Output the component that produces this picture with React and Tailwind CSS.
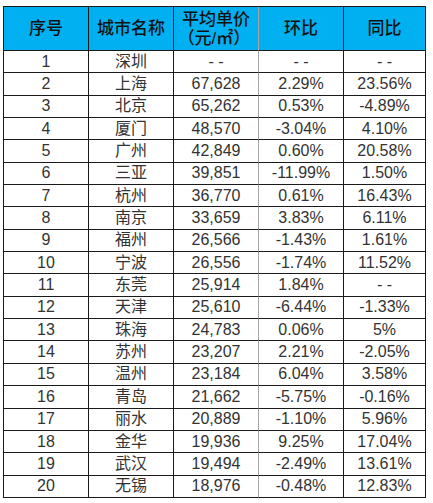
const rows = [
  ["1", "深圳", "- -", "- -", "- -"],
  ["2", "上海", "67,628", "2.29%", "23.56%"],
  ["3", "北京", "65,262", "0.53%", "-4.89%"],
  ["4", "厦门", "48,570", "-3.04%", "4.10%"],
  ["5", "广州", "42,849", "0.60%", "20.58%"],
  ["6", "三亚", "39,851", "-11.99%", "1.50%"],
  ["7", "杭州", "36,770", "0.61%", "16.43%"],
  ["8", "南京", "33,659", "3.83%", "6.11%"],
  ["9", "福州", "26,566", "-1.43%", "1.61%"],
  ["10", "宁波", "26,556", "-1.74%", "11.52%"],
  ["11", "东莞", "25,914", "1.84%", "- -"],
  ["12", "天津", "25,610", "-6.44%", "-1.33%"],
  ["13", "珠海", "24,783", "0.06%", "5%"],
  ["14", "苏州", "23,207", "2.21%", "-2.05%"],
  ["15", "温州", "23,184", "6.04%", "3.58%"],
  ["16", "青岛", "21,662", "-5.75%", "-0.16%"],
  ["17", "丽水", "20,889", "-1.10%", "5.96%"],
  ["18", "金华", "19,936", "9.25%", "17.04%"],
  ["19", "武汉", "19,494", "-2.49%", "13.61%"],
  ["20", "无锡", "18,976", "-0.48%", "12.83%"],
]

const widths = ["w-[85px]", "w-[85px]", "w-[85px]", "w-[85px]", "w-[82px]"]
const rightBorder = ["border-[#1a1a1a]", "border-[#1a1a1a]", "border-[#a6a6a6]", "border-[#1a1a1a]", "border-[#1a1a1a]"]

export default function App() {
  return (
    <div className="w-[433px] h-[503px] bg-white pt-[6px] pl-[3px]" style={{ fontFamily: '"Liberation Sans", "Noto Sans CJK SC", sans-serif' }}>
      <div className="inline-flex flex-col border-l border-t border-[#1a1a1a]">
        <div className="flex h-[44px] bg-[#00b0f0] text-[#111] text-[17px] font-medium">
          {["序号", "城市名称", null, "环比", "同比"].map((h, i) => (
            <div key={i} className={`${widths[i]} border-r border-b ${rightBorder[i]} border-b-[#1a1a1a] flex items-center justify-center text-center leading-[19px]`}>
              {h ?? (
                <div>
                  <div>平均单价</div>
                  <div className="-ml-[4px]">（元/㎡）</div>
                </div>
              )}
            </div>
          ))}
        </div>
        {rows.map((r) => (
          <div key={r[0]} className="flex h-[22.35px] text-[16px] text-[#333]">
            {r.map((c, i) => (
              <div key={i} className={`${widths[i]} border-r border-b ${rightBorder[i]} border-b-[#1a1a1a] flex items-center justify-center leading-none whitespace-pre`}>
                {c}
              </div>
            ))}
          </div>
        ))}
      </div>
    </div>
  )
}
